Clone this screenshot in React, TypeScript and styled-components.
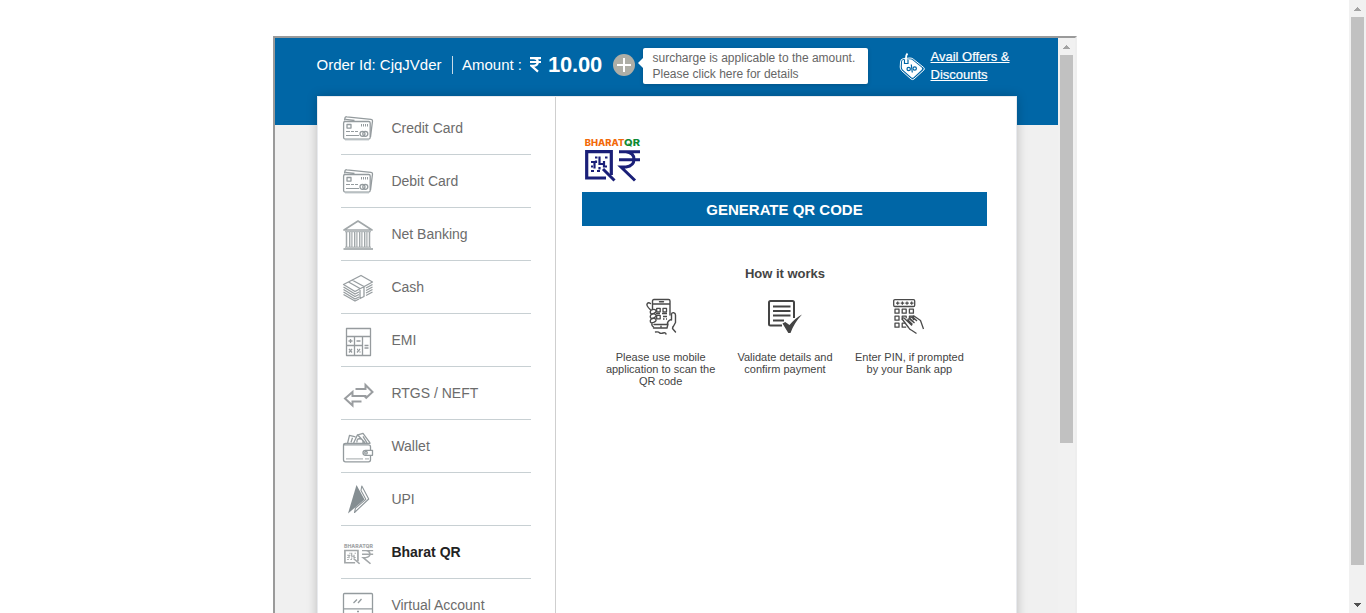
import React from "react";
import styled, { createGlobalStyle } from "styled-components";

const GlobalStyle = createGlobalStyle`
  * { box-sizing: border-box; }
  body {
    margin: 0;
    background: #fff;
    font-family: "Liberation Sans", Arial, Helvetica, sans-serif;
    overflow: hidden;
  }
  svg { display: block; }
`;

const Page = styled.div`
  display: flex;
  height: 613px;
  overflow: hidden;
`;

const Main = styled.main`
  flex: 1;
  min-width: 0;
  padding: 36px 0 0 273px;
`;

const Frame = styled.div`
  display: flex;
  width: 804px;
  height: 700px;
  border: 2px solid;
  border-color: #9a9a9a #eeeeee #eeeeee #9a9a9a;
`;

const Checkout = styled.div`
  flex: 1;
  min-width: 0;
  padding: 0 41px 0 42px;
  background: linear-gradient(#0066a6 87px, #f0f0f0 87px);
`;

const ScrollTrack = styled.div`
  width: 17px;
  flex: none;
  display: flex;
  flex-direction: column;
  align-items: center;
  background: #f1f1f1;
`;

const ScrollArrow = styled.div`
  height: 17px;
  width: 17px;
  flex: none;
  display: flex;
  align-items: center;
  justify-content: center;
`;

const ScrollThumb = styled.div<{ $height: number }>`
  width: 13px;
  height: ${(p) => p.$height}px;
  background: #c1c1c1;
`;

const Spacer = styled.div`
  flex: 1;
`;

const Header = styled.header`
  display: flex;
  align-items: center;
  height: 58px;
  color: #fff;
  font-size: 15px;
  white-space: nowrap;
`;

const OrderId = styled.div`
  width: 136px;
  height: 18px;
  line-height: 17px;
  margin-top: -4px;
  text-indent: -0.5px;
  border-right: 1px solid #c9dbe8;
`;

const AmountLabel = styled.div`
  width: 77px;
  padding-left: 9px;
  line-height: 17px;
  margin-top: -5px;
`;

const Amount = styled.div`
  display: flex;
  align-items: center;
  gap: 7px;
  width: 83px;
  margin-top: -5px;
  font-size: 22px;
  font-weight: bold;
  letter-spacing: -0.2px;
`;

const AddButton = styled.button`
  width: 22px;
  height: 22px;
  padding: 0;
  border: 0;
  border-radius: 50%;
  background: #aeaea6;
  display: flex;
  align-items: center;
  justify-content: center;
  margin-top: -4px;
`;

const Bubble = styled.div`
  position: relative;
  width: 225px;
  height: 36px;
  margin: -3px 0 0 8px;
  padding: 2px 0 0 9.5px;
  border-radius: 2px;
  background: #fff;
  color: #666;
  font-size: 12px;
  line-height: 16px;
  box-shadow: 0 1px 4px rgba(0, 0, 0, 0.2);

  &::before {
    content: "";
    position: absolute;
    left: -5px;
    top: 10px;
    border: 5px solid transparent;
    border-left: 0;
    border-right-color: #fff;
  }
`;

const Offers = styled.a`
  display: flex;
  align-items: center;
  gap: 5.5px;
  margin: -3px 0 0 31px;
  color: #fff;
  font-size: 13px;
  line-height: 18px;
  text-decoration: underline;
  -webkit-text-stroke: 0.2px #fff;
`;

const Card = styled.section`
  display: flex;
  width: 700px;
  height: 700px;
  border: 1px solid #e8eaee;
  background: #fff;
  box-shadow: 0 0 10px rgba(0, 0, 0, 0.22);
`;

const Menu = styled.nav`
  width: 238px;
  flex: none;
  padding: 5px 24px 0 23px;
  border-right: 1px solid #cfcfcf;
`;

const MenuItem = styled.div<{ $active?: boolean }>`
  display: flex;
  align-items: center;
  height: 53px;
  border-bottom: 1px solid #c8d0d3;
  color: ${(p) => (p.$active ? "#222" : "#6c6c6c")};
  font-size: 14px;
  font-weight: ${(p) => (p.$active ? "bold" : "normal")};
`;

const MenuIcon = styled.span`
  width: 50.4px;
  flex: none;
`;

const Panel = styled.div`
  flex: 1;
  display: flex;
  flex-direction: column;
  padding: 39px 29px 0 26px;
`;

const LogoBox = styled.div`
  height: 56px;
`;

const GenerateButton = styled.button`
  height: 34px;
  padding: 1px 0 0;
  border: 0;
  background: #0066a6;
  color: #fff;
  font: bold 15px "Liberation Sans", Arial, sans-serif;
`;

const HowTitle = styled.h2`
  margin: 40px 0 0;
  padding-left: 1px;
  font-size: 13px;
  line-height: 15px;
  text-align: center;
  color: #444;
`;

const Steps = styled.div`
  display: grid;
  grid-template-columns: repeat(3, 110px);
  column-gap: 14.4px;
  justify-content: center;
  margin-top: 17px;
  padding-left: 1px;
`;

const Step = styled.div`
  display: flex;
  flex-direction: column;
  align-items: center;
  gap: 15px;
  color: #444;
  font-size: 11px;
  line-height: 12px;
  text-align: center;
  white-space: nowrap;
`;

const Arrow = ({ down, color }: { down?: boolean; color: string }) => (
  <svg width="7" height="4" viewBox="0 0 7 4" shapeRendering="crispEdges" fill={color}>
    <path d={down ? "M0 0h7v1h-1v1h-1v1h-1v1h-1v-1h-1v-1h-1v-1h-1z" : "M0 4h7v-1h-1v-1h-1v-1h-1v-1h-1v1h-1v1h-1v1h-1z"} />
  </svg>
);

const Glyph = ({ children, color = "#949b9e" }: { children: React.ReactNode; color?: string }) => (
  <svg width="34" height="34" viewBox="0 0 34 34" fill="none" stroke={color} strokeWidth="1.3" strokeLinejoin="round">
    {children}
  </svg>
);

const CardsIcon = () => (
  <Glyph>
    <path d="M3.500 9.500 4 7q.3-1.500 1.700-1.200L30 8.300q1.700.3 1.500 1.700L29.500 26M4.500 8.300l9 1.200" />
    <rect x="2.600" y="10.500" width="26.600" height="17.600" rx="1.500" />
    <path d="M4 28.600h24" strokeWidth="1.600" stroke="#b8bfc2" />
    <rect x="6" y="13.500" width="4" height="3.600" />
    <path d="M20.500 13v2.500M22.500 13v2.500M24.500 13v2.500M26.500 13v2.500" strokeWidth="1" />
    <path d="M5 20.500h4m1 0h3m1 0h3M5 24.500h13" strokeWidth="1" />
    <circle cx="21.500" cy="22.800" r="2.500" />
    <circle cx="24.300" cy="22.800" r="2.500" />
  </Glyph>
);

const BankIcon = () => (
  <Glyph color="#a2a8aa">
    <path d="M3 13 17 4l14 9z" strokeWidth="1.700" />
    <path d="M4 14.500h26" stroke="#b4babc" strokeWidth="1.500" />
    <path d="M5.500 15v15M28.500 15v15" strokeWidth="1.500" />
    <path d="M9.500 15v15M14.500 15v15M19.500 15v15M24.500 15v15" strokeWidth="3" stroke="#d9dcdd" />
    <path d="M8.500 15v15M11 15v15M13.500 15v15M16 15v15M18.500 15v15M21 15v15M23.500 15v15M26 15v15" strokeWidth="1" />
    <path d="M4 30.200h26" strokeWidth="1" />
    <path d="M2.500 32h29.500" strokeWidth="1.700" />
  </Glyph>
);

const CashIcon = () => (
  <Glyph color="#979da0">
    <path d="M2.500 14.500 20 5.500 31.500 12 14 21.500zM7.500 12 19 18.500M11 10l12 6.500M19 18.500v10l4-2V16.200" />
    <path d="m2.500 17 11.500 7 4-2M2.500 19.500l11.500 7 4-2M2.500 22l11.500 7 4-2M2.500 24.500 14 31l4-2M25 18l6.500-3.500M25 20.500l6.500-3.500M25 23l6.500-3.500M25 25.500l6.500-3.500" />
  </Glyph>
);

const CalculatorIcon = () => (
  <Glyph color="#969b9e">
    <rect x="5.500" y="5.500" width="24" height="27" />
    <path d="M5.500 13.500h24M13.500 13.500v19M21.500 13.500v19M5.500 22.500h16" />
    <path d="M7.500 18h4M9.500 16v4M15.500 18h4M23.500 22.500h4M23.500 25h4M8 26l3 3.500m0-3.500-3 3.500M16 29.500l3-3.500M16 26.500h1M18.500 29h1" />
  </Glyph>
);

const TransferIcon = () => (
  <Glyph color="#9a9da0">
    <path d="M14.500 13h10V9l7 7-7 6.500M20.500 25.500h-9v4L4 22.500 11.500 16v4h13v2" strokeWidth="2" strokeLinejoin="miter" />
  </Glyph>
);

const WalletIcon = () => (
  <Glyph>
    <g transform="translate(0 1.300)">
      <path d="M2.500 15v14.500q0 2 2 2h23q2 0 2-2V25m0-5v-3.500q0-2-2-2h-25q0-1.500 2-1.500h25M6.500 13 8.500 5l6 1.500M10 12l1.500-4.500M12.500 13l4-8.500L24 12.500M16 12q-.5-4 3-3.500t3 4M17 4.500 22 3l7 9.500M22 6l4 6.500" />
      <path d="M31.500 20h-7q-2.500 0-2.500 2.500t2.500 2.500h7z" />
      <circle cx="25" cy="22.500" r="1.300" />
      <path d="M5 28.500h17m2 0h4" stroke="#b5babc" />
    </g>
  </Glyph>
);

const UpiIcon = () => (
  <Glyph color="#8d9599">
    <path d="m15.500 3 8 14.500L7 31.500z" fill="#858e92" stroke="none" />
    <path d="m20.800 4 6.900 13L13.500 30.500l1-4.500L24.800 17.300 20 8.500z" strokeWidth="1.100" />
  </Glyph>
);

const QrMark = ({ color }: { color: string }) => (
  <g fill="none" stroke={color}>
    <path d="M21 28H1.700V1.700h24.600V25" strokeWidth="3.200" />
    <path d="m18 19 11.500 11.500" strokeWidth="3" />
    <path d="M10 7.500h2.500M20 7.500h2.500M6 12h5v-1.500M9.500 11.500v7M14.500 6.500v7.500h4.500M14.500 17v2.500M6 21h3M12 21h3M19 11v5.500h3M6 16.500h2" strokeWidth="2.200" />
    <path d="M34 1.700h21M34 9.700h21M41 1.700q8 1 8 7.500t-8 7.800h-5l14 13.500" strokeWidth="3" />
  </g>
);

const SmallQrIcon = () => (
  <svg width="34" height="34" viewBox="0 0 34 34">
    <text x="3" y="12.600" fontFamily="Inter, sans-serif" fontSize="5.400" fontWeight="800" fill="#a3a6a8" textLength="29" lengthAdjust="spacingAndGlyphs">BHARATQR</text>
    <g transform="translate(3 14.800) scale(.53 .46)">
      <QrMark color="#a3a7a9" />
    </g>
  </svg>
);

const MonitorIcon = () => (
  <Glyph>
    <rect x="2.500" y="5.500" width="29" height="21" rx="1" />
    <path d="M2.500 20.800h29M12.500 15l3.500-3.500M17 15l3.500-4" />
    <path d="M16 23.500h2M13 27l-1 4h10l-1-4" />
  </Glyph>
);

const BharatLogo = () => (
  <svg width="62" height="50" viewBox="0 0 62 50">
    <text x="2.800" y="10" fontFamily="Inter, sans-serif" fontSize="9.600" fontWeight="800" fill="#f26a0a" textLength="39.500" lengthAdjust="spacingAndGlyphs">BHARAT</text>
    <text x="42" y="10" fontFamily="Inter, sans-serif" fontSize="9.600" fontWeight="800" fill="#0f8a34" textLength="16" lengthAdjust="spacingAndGlyphs">QR</text>
    <g transform="translate(3 14)">
      <QrMark color="#1a1f78" />
    </g>
  </svg>
);

const RupeeIcon = () => (
  <svg width="11" height="17" viewBox="0 0 11 17" fill="none" stroke="#fff" strokeWidth="2.200">
    <path d="M0 2.100h11M0 6h11M0 2.100h3.500q4.300.3 4.300 3.900t-4.300 3.800H1.500L8 15.600" />
  </svg>
);

const TagIcon = () => (
  <svg width="26" height="32" viewBox="0 0 26 32">
    <path d="M1.500 12q0-3 3-3.500L11 8q2 0 3.500 1.300L24.700 17.500q1.200 1.300.2 2.500L15 29q-1.500 1.200-3 0L2.500 20.500Q1.200 19 1.200 17z" fill="none" stroke="#fff" />
    <path d="M3 11.500q0-1.500 2-1.700L11 9.300q1.700 0 2.700.9l9 7.300q1 1 0 2.200l-8 7.500q-1.200 1-2.400 0L3.800 19.800Q2.800 18.800 2.800 17z" fill="#fff" />
    <path d="M5.500 10v3.500H9V10" fill="none" stroke="#0066a6" strokeWidth="1.200" />
    <path d="M7 12V8q0-3 1.500-4.500" fill="none" stroke="#fff" strokeWidth="1.800" />
    <g fill="none" stroke="#0066a6" strokeWidth="1.200">
      <circle cx="9.700" cy="19" r="1.700" />
      <circle cx="15.700" cy="18.500" r="1.700" />
      <path d="M12.300 14.500l1 8" />
    </g>
  </svg>
);

const PhoneIcon = () => (
  <svg width="38" height="38" viewBox="0 0 38 38" fill="none" stroke="#4a4a4a" strokeWidth="1.400" strokeLinecap="round" strokeLinejoin="round">
    <path d="M10.500 11V3q0-1.500 1.500-1.500h14.500Q28 1.500 28 3v14M10.500 6H28M17.500 3.800h4M12 26.500h12.500M11.500 30h13.500l1-4M19 28.300v.4" />
    <path d="M8.500 5.500q-2-1.500-3.300.2T8.200 11.500M9 12.200q3.500-1.700 4.700 0t-1.500 3q-3 1.300-3.700 0T9 12.200zM9 16.700q3.500-1.700 4.700 0t-1.500 3q-3 1.300-3.700 0t.5-3zM9 21.200q3.500-1.700 4.700 0t-1.500 3q-3 1.300-3.700 0t.5-3zM10 25.500q-.7 2 1.500 3.500" />
    <path d="M29.500 22v-6q.4-1.600 2.200-1.300T33.500 17v7.500l-3 5.500M29.500 21.500q-4 1-4.300 5M31 28.500l-.5 2 3 3.500M13.500 34q3-.5 4 .7t3.500.3 3 1" />
    <path d="M14.700 10.300v3.500h3.500v-3.500zM21 10.300h3.500v3.500H21zM14.700 17.300h3.500v3.500h-3.500zM14 15.500h4m2 0h5M21 18.500h4M21 21h1.500m1.500 0h1" strokeWidth="1.300" strokeLinecap="butt" />
  </svg>
);

const ValidateIcon = () => (
  <svg width="38" height="38" viewBox="0 0 38 38" fill="none" stroke="#444" strokeWidth="2">
    <path d="M16 27.500H4.500q-1.500 0-1.500-1.500V4.500Q3 3 4.500 3h22Q28 3 28 4.500V20" />
    <path d="M7 8.500h17.500M7 13h17.500M7 17.500h17.500M7 22.500h11" strokeWidth="1.800" />
    <path d="m16.500 25.500 2.700-1.500 4.300 3Q29.300 20 36 16.500 28 25 24.500 35h-2.200z" fill="#444" stroke="none" />
  </svg>
);

const KeypadIcon = () => (
  <svg width="38" height="38" viewBox="0 0 38 38" fill="none" stroke="#4a4a4a" strokeWidth="1.300" strokeLinejoin="round">
    <rect x="3.700" y="1.700" width="21" height="6.800" rx="1.200" />
    <path d="M6 5.100h3.500M10.700 5.100h3.500M15.300 5.100h3.500M20 5.100h3.500M7.700 3.500v3.200M12.400 3.500v3.200M17 3.500v3.200M21.700 3.500v3.200" strokeWidth="1.200" />
    <path d="M5 11.200h4v4h-4zM12.200 11.200h4v4h-4zM19.400 11.200h4v4h-4zM5 18.200h4v4h-4zM12.200 22v-3.800h4v2M19.400 20v-1.800h4v4M5 25.200h4v4h-4zM16.200 29.200h-4v-4h3" />
    <path d="m33.500 31-3-8.500L24 18q-1.500 0-1 1.200l4 3.800M26.500 22.500l-5.500-3.500q-2 0-1 1.500l4.500 4.500M24.500 25l-5-4q-2-.3-1.500 1l4.500 4.500M22 27.500l-8-7.500q-2-.3-1.500 1.500l6 8q1 2 3.500 3l4.500 3" />
  </svg>
);

const methods = [
  { name: "Credit Card", icon: <CardsIcon /> },
  { name: "Debit Card", icon: <CardsIcon /> },
  { name: "Net Banking", icon: <BankIcon /> },
  { name: "Cash", icon: <CashIcon /> },
  { name: "EMI", icon: <CalculatorIcon /> },
  { name: "RTGS / NEFT", icon: <TransferIcon /> },
  { name: "Wallet", icon: <WalletIcon /> },
  { name: "UPI", icon: <UpiIcon /> },
  { name: "Bharat QR", icon: <SmallQrIcon />, active: true },
  { name: "Virtual Account", icon: <MonitorIcon /> },
];

export default function App() {
  return (
    <>
      <GlobalStyle />
      <Page>
        <Main>
          <Frame>
            <Checkout>
              <Header>
                <OrderId>Order Id: CjqJVder</OrderId>
                <AmountLabel>Amount :</AmountLabel>
                <Amount>
                  <RupeeIcon />
                  10.00
                </Amount>
                <AddButton aria-label="Add">
                  <svg width="14" height="14" viewBox="0 0 14 14" stroke="#fff" strokeWidth="2">
                    <path d="M7 0v14M0 7h14" />
                  </svg>
                </AddButton>
                <Bubble>
                  surcharge is applicable to the amount.
                  <br />
                  Please click here for details
                </Bubble>
                <Offers>
                  <TagIcon />
                  <span>
                    Avail Offers &amp;
                    <br />
                    Discounts
                  </span>
                </Offers>
              </Header>
              <Card>
                <Menu>
                  {methods.map((m) => (
                    <MenuItem key={m.name} $active={m.active}>
                      <MenuIcon>{m.icon}</MenuIcon>
                      {m.name}
                    </MenuItem>
                  ))}
                </Menu>
                <Panel>
                  <LogoBox>
                    <BharatLogo />
                  </LogoBox>
                  <GenerateButton>GENERATE QR CODE</GenerateButton>
                  <HowTitle>How it works</HowTitle>
                  <Steps>
                    <Step>
                      <PhoneIcon />
                      <span>
                        Please use mobile
                        <br />
                        application to scan the
                        <br />
                        QR code
                      </span>
                    </Step>
                    <Step>
                      <ValidateIcon />
                      <span>
                        Validate details and
                        <br />
                        confirm payment
                      </span>
                    </Step>
                    <Step>
                      <KeypadIcon />
                      <span>
                        Enter PIN, if prompted
                        <br />
                        by your Bank app
                      </span>
                    </Step>
                  </Steps>
                </Panel>
              </Card>
            </Checkout>
            <ScrollTrack>
              <ScrollArrow>
                <Arrow color="#a3a3a3" />
              </ScrollArrow>
              <ScrollThumb $height={388} />
            </ScrollTrack>
          </Frame>
        </Main>
        <ScrollTrack>
          <ScrollArrow>
            <Arrow color="#a3a3a3" />
          </ScrollArrow>
          <ScrollThumb $height={548} />
          <Spacer />
          <ScrollArrow>
            <Arrow down color="#505050" />
          </ScrollArrow>
        </ScrollTrack>
      </Page>
    </>
  );
}
